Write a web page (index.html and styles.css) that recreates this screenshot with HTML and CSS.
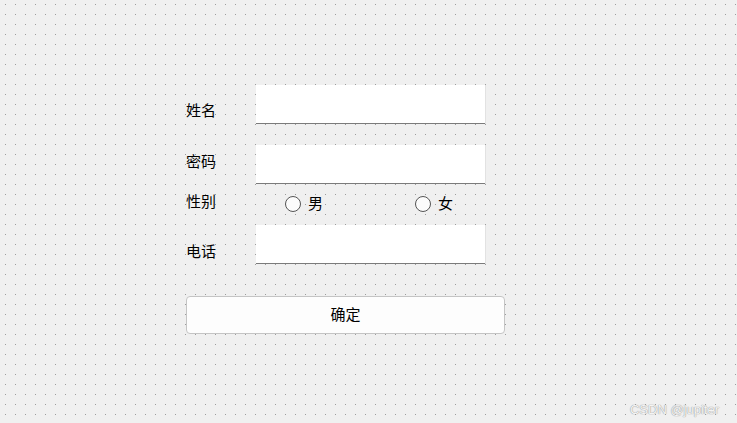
FILE: index.html
```html
<!DOCTYPE html>
<html lang="zh-CN">
<head>
<meta charset="utf-8">
<title>表单</title>
<link rel="stylesheet" href="styles.css">
</head>
<body>
<div class="canvas">
  <form class="form">
    <div class="row row-name">
      <label class="label label-name">姓名</label>
      <div class="input"></div>
    </div>
    <div class="row row-pwd">
      <label class="label label-pwd">密码</label>
      <div class="input"></div>
    </div>
    <div class="row row-sex">
      <label class="label label-sex">性别</label>
      <div class="radios">
        <span class="radio"><span class="circle"></span><span class="rtext">男</span></span>
        <span class="radio"><span class="circle"></span><span class="rtext">女</span></span>
      </div>
    </div>
    <div class="row row-tel">
      <label class="label label-tel">电话</label>
      <div class="input"></div>
    </div>
    <div class="btn"><span class="btn-text">确定</span></div>
  </form>
  <div class="watermark">CSDN @jupiter</div>
</div>
</body>
</html>
```
FILE: styles.css
```css
html, body {
  margin: 0;
  padding: 0;
}
body {
  width: 737px;
  height: 423px;
  overflow: hidden;
  font-family: "Noto Sans CJK SC", "Liberation Sans", sans-serif;
  color: #000;
  background-color: #9c9c9c;
  background-image:
    linear-gradient(to bottom, #f0f0f0 4px, transparent 4px, transparent 5px, #f0f0f0 5px),
    linear-gradient(to right, #f0f0f0 5px, transparent 5px, transparent 6px, #f0f0f0 6px);
  background-size: 10px 10px, 10px 10px;
}
.canvas {
  position: relative;
  width: 737px;
  height: 423px;
}
.form {
  margin: 0;
  padding: 85px 0 0 186px;
  display: flex;
  flex-direction: column;
  align-items: flex-start;
}
.row {
  display: flex;
  align-items: flex-start;
}
.label {
  width: 70px;
  font-size: 15px;
  line-height: 15px;
}
.label-name { padding-top: 17px; }
.label-pwd { padding-top: 8px; }
.label-tel { padding-top: 18px; }
.label-sex { padding-top: 1px; }
.input {
  width: 229px;
  height: 38px;
  background: #ffffff;
  border-bottom: 1px solid #7b7b7b;
  box-shadow: 1px 0 0 #e2e2e2;
}
.row-pwd { margin-top: 21px; }
.row-sex { margin-top: 8px; height: 20px; }
.row-tel { margin-top: 13px; }
.radios {
  display: flex;
  padding-left: 29px;
}
.radio {
  width: 130px;
  display: flex;
  align-items: center;
  height: 20px;
  padding-top: 3px;
  box-sizing: border-box;
}
.circle {
  width: 14px;
  height: 14px;
  border: 1px solid #555555;
  border-radius: 50%;
  background: #fcfcfc;
  flex: none;
}
.rtext {
  margin-left: 7px;
  font-size: 15px;
  line-height: 15px;
  position: relative;
  top: -1px;
}
.btn {
  margin-top: 32px;
  width: 317px;
  height: 36px;
  border: 1px solid #c4c4c4;
  border-radius: 4px;
  background: #fdfdfd;
  display: flex;
  align-items: center;
  justify-content: center;
  font-size: 15px;
  line-height: 15px;
}
.btn-text {
  margin-bottom: 3px;
}
.watermark {
  position: absolute;
  right: 18px;
  bottom: 6px;
  font-family: "Liberation Sans", sans-serif;
  font-size: 13px;
  color: #f4f4f4;
  text-shadow: 0 0 1px #9a9a9a, 0 0 1px #9a9a9a;
}
```
